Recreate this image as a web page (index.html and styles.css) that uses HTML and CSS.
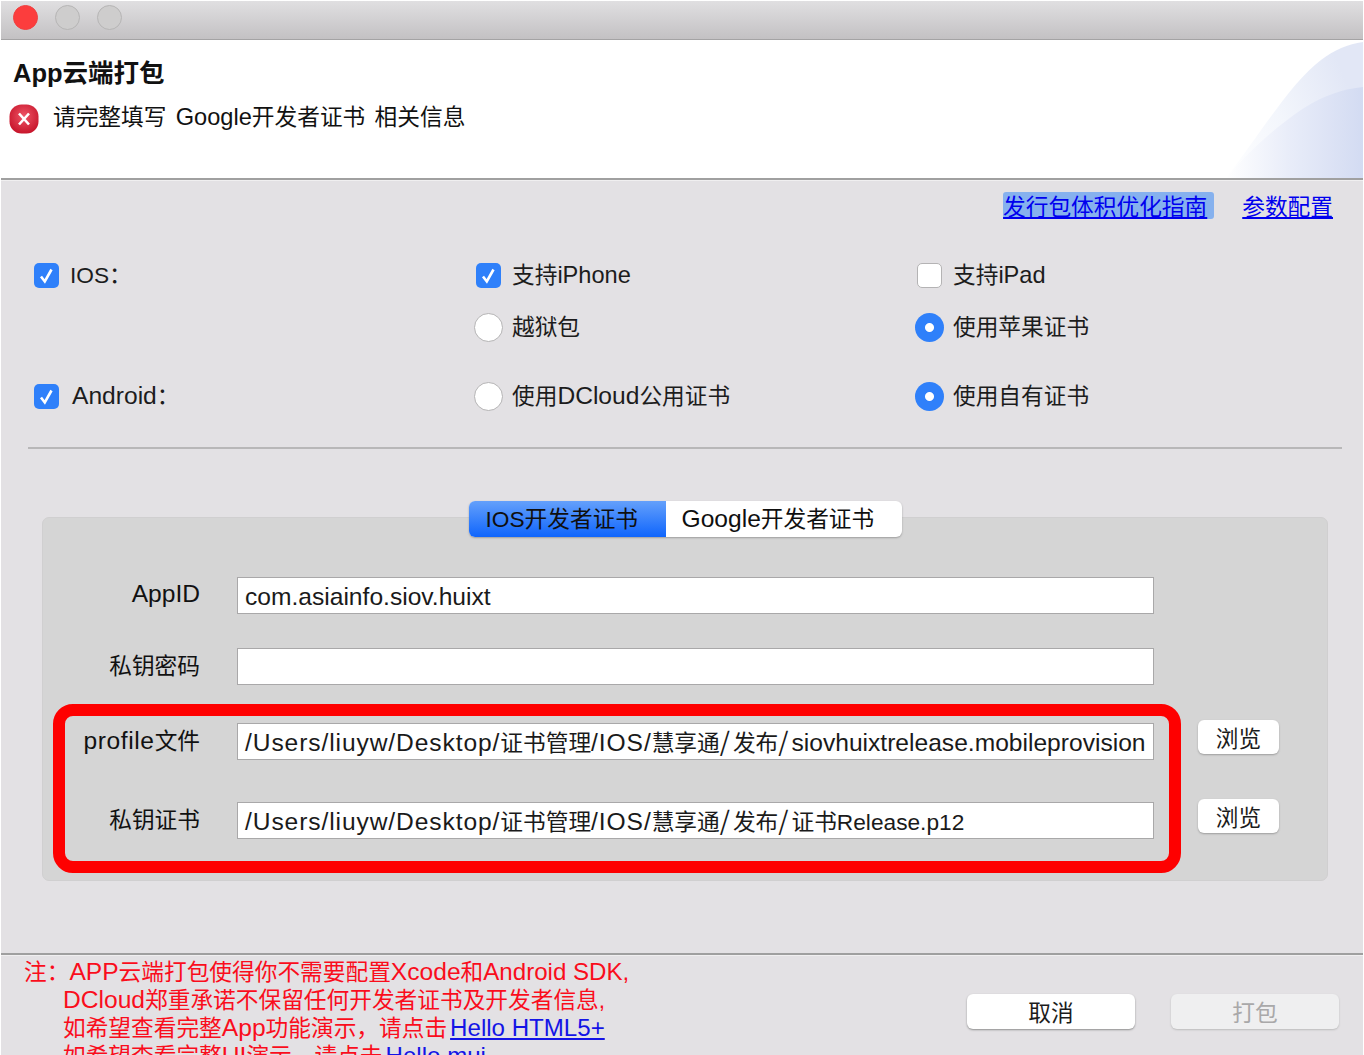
FILE: index.html
```html
<!DOCTYPE html>
<html lang="zh-CN">
<head>
<meta charset="utf-8">
<title>App云端打包</title>
<link rel="stylesheet" href="styles.css">
</head>
<body>
<div class="window">
  <div class="titlebar">
    <span class="light light-red"></span>
    <span class="light"></span>
    <span class="light"></span>
  </div>
  <header class="banner">
    <svg class="swoosh" width="137" height="138" viewBox="0 0 137 138">
      <defs>
        <linearGradient id="sw1" x1="0" y1="1" x2="1" y2="0.6">
          <stop offset="0" stop-color="#ffffff"/>
          <stop offset="0.5" stop-color="#f3f6fc"/>
          <stop offset="1" stop-color="#e2e7f6"/>
        </linearGradient>
        <linearGradient id="sw2" x1="0" y1="0" x2="1" y2="0">
          <stop offset="0" stop-color="#ffffff"/>
          <stop offset="0.45" stop-color="#e9edf9"/>
          <stop offset="1" stop-color="#d3dbf2"/>
        </linearGradient>
      </defs>
      <path d="M0 138C30 100 65 42 95 20C108 10 122 4 137 2V138Z" fill="url(#sw1)"/>
      <path d="M0 138C22 112 48 88 78 68C98 55 118 49 137 47V138Z" fill="url(#sw2)"/>
    </svg>
    <h1 class="banner-title">App云端打包</h1>
    <div class="banner-msg">
      <svg class="err-icon" width="30" height="30" viewBox="0 0 30 30">
        <defs>
          <radialGradient id="errg" cx="0.5" cy="0.4" r="0.6">
            <stop offset="0" stop-color="#ee5566"/>
            <stop offset="1" stop-color="#c8162c"/>
          </radialGradient>
        </defs>
        <rect x="0.5" y="0.5" width="29" height="29" rx="12" fill="url(#errg)"/>
        <path d="M10 9.5L20 20.5M20 9.5L10 20.5" stroke="#fff" stroke-width="2.6" fill="none"/>
      </svg>
      <span class="msg-text">请完整填写 <span class="en-s">Google</span>开发者证书 相关信息</span>
    </div>
  </header>
  <main class="content">
    <div class="links">
      <a class="link link-focus" href="#">发行包体积优化指南</a>
      <a class="link" href="#">参数配置</a>
    </div>
    <div class="options">
      <label class="opt"><span class="box on"><svg width="25" height="25" viewBox="0 0 25 25"><path d="M7 13.5L10.8 18.5L17.5 6.5" stroke="#fff" stroke-width="2.6" fill="none"/></svg></span><span>IOS：</span></label>
      <label class="opt"><span class="box on"><svg width="25" height="25" viewBox="0 0 25 25"><path d="M7 13.5L10.8 18.5L17.5 6.5" stroke="#fff" stroke-width="2.6" fill="none"/></svg></span><span>支持<span class="en-s">iPhone</span></span></label>
      <label class="opt"><span class="box"></span><span>支持<span class="en-s">iPad</span></span></label>

      <span></span>
      <label class="opt"><span class="radio"></span><span>越狱包</span></label>
      <label class="opt"><span class="radio on"></span><span>使用苹果证书</span></label>

      <label class="opt"><span class="box on"><svg width="25" height="25" viewBox="0 0 25 25"><path d="M7 13.5L10.8 18.5L17.5 6.5" stroke="#fff" stroke-width="2.6" fill="none"/></svg></span><span class="shift"><span class="en">Android</span>：</span></label>
      <label class="opt"><span class="radio"></span><span>使用<span class="en">DCloud</span>公用证书</span></label>
      <label class="opt"><span class="radio on"></span><span>使用自有证书</span></label>
    </div>
    <hr class="divider">
    <section class="panel">
      <div class="seg">
        <span class="seg-item seg-active">IOS开发者证书</span>
        <span class="seg-item"><span class="en">Google</span>开发者证书</span>
      </div>
      <div class="form">
        <div class="row row-a">
          <span class="lbl"><span class="en">AppID</span></span>
          <div class="field"><span class="en">com.asiainfo.siov.huixt</span></div>
        </div>
        <div class="row row-b">
          <span class="lbl">私钥密码</span>
          <div class="field"></div>
        </div>
        <div class="row row-c">
          <span class="lbl"><span class="en wide">profile</span>文件</span>
          <div class="field"><span class="en path">/Users/liuyw/Desktop/</span>证书管理<span class="en path">/IOS/</span>慧享通<span class="sl">/</span>发布<span class="sl">/</span><span class="en">siovhuixtrelease.mobileprovision</span></div>
          <button class="browse" type="button">浏览</button>
        </div>
        <div class="row row-d">
          <span class="lbl">私钥证书</span>
          <div class="field"><span class="en path">/Users/liuyw/Desktop/</span>证书管理<span class="en path">/IOS/</span>慧享通<span class="sl">/</span>发布<span class="sl">/</span>证书Release.p12</div>
          <button class="browse" type="button">浏览</button>
        </div>
      </div>
      <div class="redbox"></div>
    </section>
  </main>
  <footer class="footer">
    <p class="note">注：<span class="en">APP</span>云端打包使得你不需要配置<span class="en">Xcode</span>和<span class="en-m">Android SDK,</span><br><span class="en">DCloud</span>郑重承诺不保留任何开发者证书及开发者信息,<br>如希望查看完整<span class="en">App</span>功能演示，请点击<a class="note-link en-m" href="#">Hello HTML5+</a><br>如希望查看完整<span class="en">UI</span>演示，请点击<a class="note-link en-m" href="#">Hello mui</a></p>
    <div class="actions">
      <button class="btn" type="button">取消</button>
      <button class="btn btn-off" type="button">打包</button>
    </div>
  </footer>
</div>
</body>
</html>
```

FILE: styles.css
```css
* { box-sizing: border-box; }
html, body { margin: 0; height: 1055px; overflow: hidden; background: #fff; }
body, button {
  font-family: "Liberation Sans", "Noto Sans CJK SC", sans-serif;
  font-size: 22.7px;
  color: #1c1c1c;
}
.en { font-size: 24.6px; }
.en-m { font-size: 24.1px; }
.en-s { font-size: 23.6px; }
.wide { letter-spacing: 0.6px; }
.path { letter-spacing: 0.9px; }
.sl {
  font-family: "Noto Sans CJK SC", sans-serif;
  font-size: 26px;
  line-height: 1;
  letter-spacing: 3px;
}
.window {
  height: 1055px;
  padding: 1px 1px 0;
  display: flex;
  flex-direction: column;
  background: #fff;
}
.titlebar {
  height: 39px;
  flex: none;
  display: flex;
  align-items: center;
  gap: 17px;
  padding: 0 0 6px 12px;
  background: linear-gradient(#e0dfe1, #c3c1c3);
  border-bottom: 1px solid #a4a3a4;
}
.light {
  width: 25px;
  height: 25px;
  border-radius: 50%;
  background: #cecdcd;
  border: 1px solid #b6b5b5;
}
.light-red { background: #fc3d3d; border-color: #f04040; }
.banner {
  position: relative;
  height: 140px;
  flex: none;
  background: #fff;
  border-bottom: 2px solid #a0a0a0;
  overflow: hidden;
}
.swoosh { position: absolute; right: 0; top: 0; }
.banner-title {
  position: relative;
  margin: 17px 0 0 12px;
  font-size: 25.5px;
  line-height: 32px;
  font-weight: 700;
  color: #111;
}
.banner-msg {
  position: relative;
  display: flex;
  align-items: center;
  margin: 15px 0 0 8px;
  gap: 14px;
  height: 30px;
  color: #111;
}
.msg-text {
  position: relative;
  top: -4px;
  word-spacing: 3px;
}
.content {
  flex: 1;
  min-height: 0;
  background: #e3e1e4;
  padding-top: 1px;
  box-shadow: inset 0 1px #f0eff0;
}
.links {
  display: flex;
  justify-content: flex-end;
  gap: 28px;
  margin-top: 11px;
  padding-right: 30px;
  height: 27px;
  line-height: 31px;
}
.link { color: #0000ee; text-decoration: underline; }
.link-focus {
  padding-right: 7px;
  background: #86b1ee;
  border-radius: 3px;
}
.options {
  display: grid;
  grid-template-columns: 442px 441px 1fr;
  grid-template-rows: 52px 69px 30px;
  margin-top: 41px;
  padding-left: 33px;
}
.opt {
  display: flex;
  align-items: center;
  height: 30px;
  line-height: 30px;
  gap: 11px;
}
.box {
  width: 25px;
  height: 25px;
  flex: none;
  border-radius: 5px;
  background: #fff;
  border: 1px solid #b4b3b4;
}
.box.on { background: #2f80fa; border: 0; }
.box svg { display: block; }
.shift { margin-left: 2px; }
.radio {
  width: 29px;
  height: 29px;
  flex: none;
  margin: 0 -2px;
  border-radius: 50%;
  background: #fff;
  border: 1px solid #b4b3b4;
}
.radio.on {
  background: radial-gradient(circle, #fff 0 4px, #2f80fa 5px);
  border: 0;
}
.divider {
  margin: 36px 21px 0 27px;
  height: 2px;
  border: 0;
  background: #b8b7b8;
}
.panel {
  position: relative;
  width: 1286px;
  height: 364px;
  margin: 68px 0 0 41px;
  background: #d5d5d5;
  border: 1px solid #d0cfd0;
  border-radius: 7px;
  display: flex;
  flex-direction: column;
  align-items: center;
}
.seg {
  display: flex;
  width: 433px;
  height: 36px;
  margin-top: -17px;
  flex: none;
  background: #fff;
  border-radius: 6px;
  box-shadow: 0 1px 2px #9d9d9d;
  overflow: hidden;
  line-height: 36px;
  color: #0f0f0f;
}
.seg-item { flex: 1; padding-left: 16px; }
.seg-active {
  flex: none;
  width: 197px;
  padding-left: 17px;
  background: linear-gradient(#64a0fb, #0f65fc);
}
.form { align-self: stretch; }
.row {
  display: flex;
  align-items: center;
  height: 37px;
}
.row-a { margin-top: 40px; }
.row-b { margin-top: 34px; }
.row-c { margin-top: 38px; }
.row-d { margin-top: 42px; }
.lbl {
  width: 157px;
  flex: none;
  text-align: right;
  position: relative;
  top: -2px;
  color: #111;
}
.field {
  width: 917px;
  height: 37px;
  margin-left: 37px;
  padding: 0 7px;
  flex: none;
  line-height: 38px;
  white-space: nowrap;
  background: #fff;
  border: 1px solid #a9a8a9;
  color: #1a1a1a;
}
.browse {
  width: 81px;
  height: 34px;
  margin: 0 0 9px 44px;
  padding: 0;
  flex: none;
  background: #fff;
  border: 0;
  border-radius: 6px;
  box-shadow: 0 1px 2px #9d9d9d;
}
.redbox {
  position: absolute;
  left: 10px;
  top: 186px;
  width: 1128px;
  height: 169px;
  border: 12.5px solid #fe0000;
  border-radius: 20px;
}
.footer {
  height: 102px;
  flex: none;
  display: flex;
  justify-content: space-between;
  overflow: hidden;
  background: #e3e1e4;
  border-top: 2px solid #9f9f9f;
  box-shadow: inset 0 1px #f0eff0;
}
.note {
  margin: 3px 0 0;
  padding: 0 0 0 62px;
  text-indent: -39px;
  line-height: 28px;
  color: #fa0d1c;
  white-space: nowrap;
}
.note-link { margin-left: 3px; color: #1414e6; text-decoration: underline; }
.actions {
  display: flex;
  gap: 36px;
  margin: 39px 24px 0 0;
}
.btn {
  width: 168px;
  height: 35px;
  padding: 0;
  background: #fff;
  border: 0;
  border-radius: 6px;
  box-shadow: 0 1px 2px #8f8f8f;
}
.btn-off {
  background: #efeff0;
  color: #a9a8a9;
  box-shadow: 0 1px 2px #bcbcbc;
}
```
